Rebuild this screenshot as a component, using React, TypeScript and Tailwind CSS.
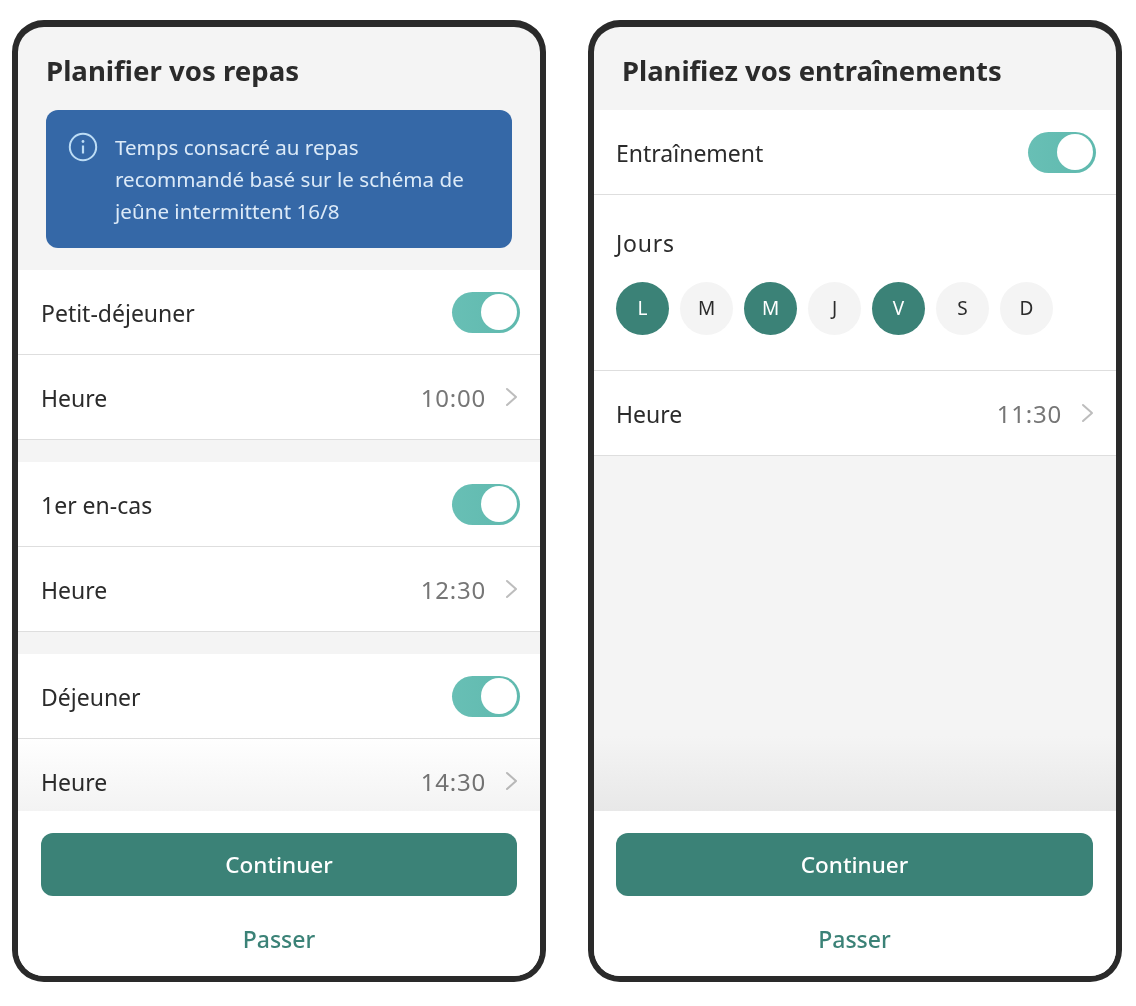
import React from "react";

const font = { fontFamily: '"Noto Sans", "Open Sans", sans-serif' };

function Toggle() {
  return (
    <div className="w-[68px] h-[41px] rounded-full bg-gradient-to-r from-[#68bfb5] to-[#5fb9ae] flex items-center justify-end pr-[3px]">
      <div className="w-[36px] h-[36px] rounded-full bg-white" />
    </div>
  );
}

function Chevron() {
  return (
    <svg width="14" height="20" viewBox="0 0 14 20" fill="none" className="ml-[19px]">
      <path d="M2 2l9 8-9 8" stroke="#bdbdbd" strokeWidth="2" strokeLinecap="round" strokeLinejoin="round" />
    </svg>
  );
}

function ToggleRow({ label, pl = "pl-[23px]" }: { label: string; pl?: string }) {
  return (
    <div className={`h-[85px] bg-white border-b border-[#dedede] flex items-center justify-between pr-[20px] ${pl}`}>
      <span className="pt-[2px] text-[23px] text-[#2b2b2b]">{label}</span>
      <Toggle />
    </div>
  );
}

function TimeRow({ time, pl = "pl-[23px]" }: { time: string; pl?: string }) {
  return (
    <div className={`h-[85px] shrink-0 bg-white border-b border-[#dedede] flex items-center justify-between pr-[21px] ${pl}`}>
      <span className="pt-[2px] text-[23px] text-[#2b2b2b]">Heure</span>
      <div className="flex items-center">
        <span className="pt-[2px] text-[24px] text-[#767676] tracking-[0.8px]">{time}</span>
        <Chevron />
      </div>
    </div>
  );
}

function Footer({ pl = "pl-[23px]" }: { pl?: string }) {
  return (
    <div className={`h-[165px] shrink-0 bg-white pr-[23px] pt-[22px] flex flex-col items-center ${pl}`}>
      <div className="w-full h-[63px] rounded-[12px] bg-[#3b8277] flex items-center justify-center text-white text-[22.5px] font-medium">
        Continuer
      </div>
      <div className="mt-[26px] text-[23px] font-medium text-[#3b8277]">Passer</div>
    </div>
  );
}

function Phone({ children }: { children: React.ReactNode }) {
  return (
    <div className="w-[534px] h-[962px] rounded-[32px] border-[6px] border-t-[7px] border-[#2a2a2a] overflow-hidden flex flex-col bg-[#f4f4f4]">
      {children}
    </div>
  );
}

function Fade() {
  return (
    <div className="absolute left-0 right-0 bottom-0 h-[75px] bg-gradient-to-b from-white to-[#f3f3f3] mix-blend-multiply" />
  );
}

function Day({ letter, on }: { letter: string; on?: boolean }) {
  return (
    <div
      className={`w-[53px] h-[53px] rounded-full flex items-center justify-center text-[19px] ${
        on ? "bg-[#3b8277] text-white" : "bg-[#f4f4f4] text-[#2b2b2b]"
      }`}
    >
      {letter}
    </div>
  );
}

export default function App() {
  return (
    <div className="w-[1136px] h-[1006px] bg-white flex pl-[12px] pt-[20px] gap-[42px]" style={font}>
      <Phone>
        <div className="relative flex-1 min-h-0 overflow-hidden">
          <div className="h-[83px] pl-[28px] flex items-center pt-[5px]">
            <h1 className="text-[27.6px] font-bold text-[#2b2b2b] leading-none">Planifier vos repas</h1>
          </div>
          <div className="ml-[28px] mr-[28px] h-[138px] rounded-[12px] bg-[#3568a7] flex pl-[22px] pt-[21px] text-[#dceaf8]">
            <svg width="30" height="30" viewBox="0 0 30 30" fill="none" className="shrink-0 mt-[1px]">
              <circle cx="15" cy="15" r="13.2" stroke="#bcdcf5" strokeWidth="2" />
              <circle cx="15" cy="9.5" r="1.4" fill="#bcdcf5" />
              <path d="M15 13.5v8" stroke="#bcdcf5" strokeWidth="2.2" />
            </svg>
            <p className="ml-[17px] text-[20.6px] leading-[32px] w-[370px]">
              Temps consacré au repas recommandé basé sur le schéma de jeûne intermittent 16/8
            </p>
          </div>
          <div className="h-[22px]" />
          <ToggleRow label="Petit-déjeuner" />
          <TimeRow time="10:00" />
          <div className="h-[22px]" />
          <ToggleRow label="1er en-cas" />
          <TimeRow time="12:30" />
          <div className="h-[22px]" />
          <ToggleRow label="Déjeuner" />
          <TimeRow time="14:30" />
          <Fade />
        </div>
        <Footer />
      </Phone>
      <Phone>
        <div className="relative flex-1 min-h-0 overflow-hidden">
          <div className="h-[83px] pl-[28px] flex items-center pt-[5px]">
            <h1 className="text-[27.4px] font-bold text-[#2b2b2b] leading-none">Planifiez vos entraînements</h1>
          </div>
          <ToggleRow label="Entraînement" pl="pl-[22px]" />
          <div className="h-[176px] bg-white border-b border-[#dedede] pl-[22px] pt-[32px]">
            <div className="text-[23px] text-[#2b2b2b] leading-[32px] tracking-[0.8px]">Jours</div>
            <div className="flex gap-[11px] mt-[23px]">
              <Day letter="L" on />
              <Day letter="M" />
              <Day letter="M" on />
              <Day letter="J" />
              <Day letter="V" on />
              <Day letter="S" />
              <Day letter="D" />
            </div>
          </div>
          <TimeRow time="11:30" pl="pl-[22px]" />
          <Fade />
        </div>
        <Footer pl="pl-[22px]" />
      </Phone>
    </div>
  );
}
